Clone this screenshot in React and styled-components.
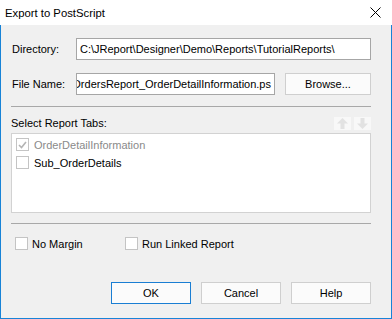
import React from 'react';
import styled, { createGlobalStyle } from 'styled-components';

const Global = createGlobalStyle`
    html, body {
        margin: 0;
        padding: 0;
        background: #fff;
    }
    body {
        font-family: "Liberation Sans", Arial, sans-serif;
        font-size: 11px;
        color: #000;
    }
`;

const Window = styled.div`
    width: 392px;
    height: 319px;
    display: flex;
    flex-direction: column;
    box-sizing: border-box;
`;

const TitleBar = styled.div`
    height: 25px;
    flex: 0 0 25px;
    background: #fff;
    display: flex;
    align-items: center;
    justify-content: space-between;
    padding-left: 5px;
    padding-right: 11px;
    font-size: 11.3px;
`;

const Body = styled.div`
    flex: 1;
    background: #f0f0f0;
    border: 1px solid #1883d7;
    border-top: none;
    padding: 13px 20px 14px 10px;
    display: flex;
    flex-direction: column;
`;

const FieldGrid = styled.div`
    display: grid;
    grid-template-columns: 65px 1fr 86px;
    column-gap: 10px;
    row-gap: 13px;
    align-items: center;
`;

const Label = styled.label`
    padding-left: 1px;
`;

const TextBox = styled.div`
    grid-column: ${p => p.$wide ? '2 / 4' : '2 / 3'};
    margin-left: -10px;
    height: 22px;
    box-sizing: border-box;
    border: 1px solid #a6a6a6;
    background: #fff;
    display: flex;
    align-items: center;
    justify-content: ${p => p.$scrolled ? 'flex-end' : 'flex-start'};
    padding: 0 3px;
    overflow: hidden;
    white-space: nowrap;
`;

const Button = styled.button`
    width: ${p => p.$w || 80}px;
    height: 22px;
    box-sizing: border-box;
    background: #fbfbfb;
    border: 1px solid ${p => p.$default ? '#1a7ed3' : '#cfcfcf'};
    font: inherit;
    color: #000;
    padding: 0;
`;

const Separator = styled.div`
    height: 1px;
    background: #a8a8a8;
    margin-top: ${p => p.$top}px;
`;

const ListHeader = styled.div`
    margin-top: 9px;
    height: 14px;
    display: flex;
    align-items: center;
    justify-content: space-between;
    margin-bottom: 3px;
`;

const MoveButtons = styled.div`
    display: flex;
    gap: 3px;
`;

const MoveIcon = styled.svg`
    display: block;
`;

const ListBox = styled.div`
    height: 80px;
    box-sizing: border-box;
    border: 1px solid #d2d2d2;
    background: #fff;
    padding: 4px 4px;
    display: flex;
    flex-direction: column;
    gap: 5px;
`;

const CheckRow = styled.div`
    display: flex;
    align-items: center;
    gap: 5px;
    color: ${p => p.$disabled ? '#8a8a8a' : '#000'};
    height: 13px;
`;

const Box = styled.span`
    width: 13px;
    height: 13px;
    box-sizing: border-box;
    border: 1px solid #c4c4c4;
    background: #fff;
    display: flex;
    align-items: center;
    justify-content: center;
`;

const Options = styled.div`
    margin-top: 13px;
    padding-left: 4px;
    display: flex;
`;

const Option = styled(CheckRow)`
    width: ${p => p.$w}px;
    gap: 4px;
`;

const Footer = styled.div`
    margin-top: auto;
    display: flex;
    justify-content: flex-end;
    gap: 10px;
`;

const Check = ({ checked, disabled }) => (
    <Box>
        {checked && (
            <svg width="9" height="8" viewBox="0 0 9 8">
                <path d="M1 4 L3.5 6.5 L8 1" fill="none" stroke={disabled ? '#b4b4b4' : '#333'} strokeWidth="1.6" />
            </svg>
        )}
    </Box>
);

const Arrow = ({ down }) => (
    <MoveIcon width="17" height="13" viewBox="0 0 17 13">
        <rect width="17" height="13" fill="#f8f8f8" />
        <g transform={down ? 'rotate(180 8.5 6.5)' : undefined} fill="#e2e2e2">
            <path d="M8.5 1 L14 6.5 L10.5 6.5 L10.5 12 L6.5 12 L6.5 6.5 L3 6.5 Z" />
        </g>
    </MoveIcon>
);

const App = () => (
    <Window>
        <Global />
        <TitleBar>
            <span>Export to PostScript</span>
            <svg width="11" height="11" viewBox="0 0 11 11">
                <path d="M0.5 0.5 L10.5 10.5 M10.5 0.5 L0.5 10.5" stroke="#000" strokeWidth="1" />
            </svg>
        </TitleBar>
        <Body>
            <FieldGrid>
                <Label>Directory:</Label>
                <TextBox $wide>C:\JReport\Designer\Demo\Reports\TutorialReports\</TextBox>
                <Label>File Name:</Label>
                <TextBox $scrolled>OrdersReport_OrderDetailInformation.ps</TextBox>
                <Button $w={86}>Browse...</Button>
            </FieldGrid>
            <Separator $top={11} />
            <ListHeader>
                <span>Select Report Tabs:</span>
                <MoveButtons>
                    <Arrow />
                    <Arrow down />
                </MoveButtons>
            </ListHeader>
            <ListBox>
                <CheckRow $disabled>
                    <Check checked disabled />
                    OrderDetailInformation
                </CheckRow>
                <CheckRow>
                    <Check />
                    Sub_OrderDetails
                </CheckRow>
            </ListBox>
            <Separator $top={10} />
            <Options>
                <Option $w={110}>
                    <Check />
                    No Margin
                </Option>
                <Option $w={130}>
                    <Check />
                    Run Linked Report
                </Option>
            </Options>
            <Footer>
                <Button $default>OK</Button>
                <Button>Cancel</Button>
                <Button>Help</Button>
            </Footer>
        </Body>
    </Window>
);

export default App;
